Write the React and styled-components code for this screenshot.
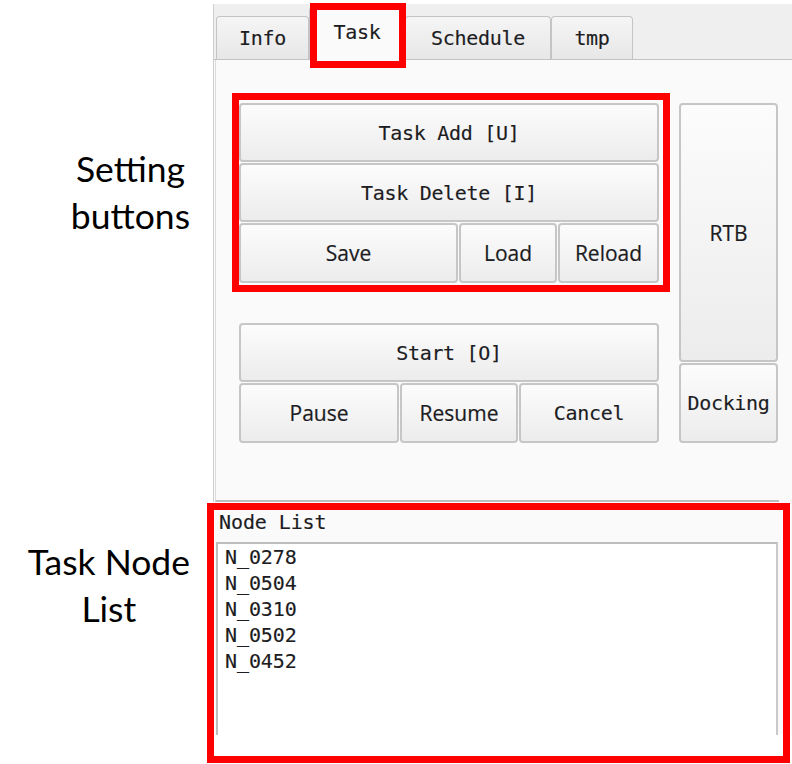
import React from 'react';
import styled, { createGlobalStyle, css } from 'styled-components';

const MONO = `"DejaVu Sans Mono", "Liberation Mono", monospace`;
const SANS = `"Open Sans", "Noto Sans", sans-serif`;

const GlobalStyle = createGlobalStyle`
    html, body {
        margin: 0;
        padding: 0;
        background: #fff;
    }
    body {
        width: 792px;
        height: 764px;
        overflow: hidden;
    }
`;

// red annotation frame drawn over a part of the UI
const redBox = ({ top, right, bottom, left }) => css`
    &::after {
        content: '';
        position: absolute;
        top: ${top}px;
        right: ${right}px;
        bottom: ${bottom}px;
        left: ${left}px;
        border: 7px solid #ff0000;
        pointer-events: none;
        z-index: 5;
    }
`;

const monoText = css`
    font-family: ${MONO};
    font-size: 20px;
    letter-spacing: -0.3px;
    color: #1c1c22;
    -webkit-text-stroke: 0.15px #1c1c22;
`;

const Page = styled.div`
    display: grid;
    grid-template-columns: 213px 579px;
    width: 792px;
    height: 764px;
`;

const Labels = styled.div`
    display: flex;
    flex-direction: column;
    align-items: flex-end;
    padding: 145px 23px 0 0;
    font-family: Lato, "Open Sans", sans-serif;
    font-size: 35.5px;
    line-height: 47px;
    color: #000;
`;

const Callout = styled.div`
    text-align: center;
    margin-top: ${(p) => p.$offset || 0}px;
`;

const Window = styled.div`
    margin-top: 4px;
    display: flex;
    flex-direction: column;
`;

const TabBar = styled.div`
    height: 55px;
    display: flex;
    align-items: flex-end;
    padding-left: 2px;
    background: #efefef;
    border-left: 1px solid #cfcfcf;
    border-bottom: 1px solid #c3c3c3;
`;

const Tab = styled.div`
    position: relative;
    box-sizing: border-box;
    width: ${(p) => p.$w}px;
    height: ${(p) => (p.$active ? 53 : 43)}px;
    margin-bottom: ${(p) => (p.$active ? -1 : 0)}px;
    display: flex;
    align-items: center;
    justify-content: center;
    padding-bottom: ${(p) => (p.$active ? 4 : 0)}px;
    border: 1px solid #c4c4c4;
    border-bottom: none;
    border-radius: 4px 4px 0 0;
    background: ${(p) => (p.$active ? '#fafafa' : 'linear-gradient(#f5f5f5, #e7e7e7)')};
    ${monoText}
    ${(p) => p.$marked && redBox({ top: -5, right: -2, bottom: -8, left: 0 })}
`;

const Main = styled.div`
    background: #fafafa;
    border-left: 1px solid #cfcfcf;
`;

const TabPage = styled.div`
    box-sizing: border-box;
    width: 564px;
    height: 442px;
    margin-left: 1px;
    border-left: 1px solid #dcdcdc;
    border-bottom: 2px solid #bdbdbd;
    padding: 43px 0 0 23px;
    display: flex;
    align-items: flex-start;
    gap: 20px;
`;

const LeftStack = styled.div`
    width: 420px;
    display: flex;
    flex-direction: column;
    gap: 40px;
`;

const ButtonGroup = styled.div`
    position: relative;
    display: grid;
    grid-template-rows: ${(p) => p.$rows};
    gap: 1px;
    ${(p) => p.$marked && redBox({ top: -10, right: -11, bottom: -9, left: -7 })}
`;

const ButtonRow = styled.div`
    display: grid;
    grid-template-columns: ${(p) => p.$cols};
    gap: 1px;
`;

const SideStack = styled.div`
    width: 99px;
    display: grid;
    grid-template-rows: 259px 80px;
    gap: 1px;
`;

const Button = styled.button`
    box-sizing: border-box;
    margin: 0;
    padding: 0;
    width: 100%;
    height: 100%;
    border: 2px solid #c6c6c6;
    border-radius: 4px;
    background: linear-gradient(#fcfcfc, #ececec);
    ${(p) =>
        p.$mono
            ? monoText
            : css`
                  font-family: ${SANS};
                  font-size: 21px;
                  color: #1c1c22;
                  -webkit-text-stroke: 0.2px #1c1c22;
              `}
`;

const BottomArea = styled.div`
    position: relative;
    height: 262px;
    background: #fff;
    ${redBox({ top: 1, right: 2, bottom: 1, left: -6 })}
`;

const ListSection = styled.div`
    height: 233px;
    display: flex;
    flex-direction: column;
    background: #fafafa;
`;

const ListTitle = styled.div`
    height: 40px;
    display: flex;
    align-items: center;
    padding-left: 6px;
    ${monoText}
    letter-spacing: -0.1px;
`;

const ListBox = styled.div`
    flex: 1;
    width: 562px;
    box-sizing: border-box;
    margin-left: 3px;
    padding-left: 7px;
    background: #fff;
    border-top: 2px solid #bdbdbd;
    border-left: 2px solid #bdbdbd;
    border-right: 2px solid #c9c9c9;
`;

const ListItem = styled.div`
    ${monoText}
    letter-spacing: -0.1px;
    line-height: 26px;
`;

const tabs = [
    { label: 'Info', w: 93 },
    { label: 'Task', w: 96, active: true },
    { label: 'Schedule', w: 146 },
    { label: 'tmp', w: 82 },
];

const nodes = ['N_0278', 'N_0504', 'N_0310', 'N_0502', 'N_0452'];

export default function App() {
    return (
        <>
            <GlobalStyle />
            <Page>
                <Labels>
                    <Callout>
                        Setting
                        <br />
                        buttons
                    </Callout>
                    <Callout $offset={299}>
                        Task Node
                        <br />
                        List
                    </Callout>
                </Labels>
                <Window>
                    <TabBar>
                        {tabs.map((t) => (
                            <Tab key={t.label} $w={t.w} $active={t.active} $marked={t.active}>
                                {t.label}
                            </Tab>
                        ))}
                    </TabBar>
                    <Main>
                        <TabPage>
                            <LeftStack>
                                <ButtonGroup $rows="59px 59px 60px" $marked>
                                    <Button $mono>Task Add [U]</Button>
                                    <Button $mono>Task Delete [I]</Button>
                                    <ButtonRow $cols="219px 98px 1fr">
                                        <Button>Save</Button>
                                        <Button>Load</Button>
                                        <Button>Reload</Button>
                                    </ButtonRow>
                                </ButtonGroup>
                                <ButtonGroup $rows="59px 60px">
                                    <Button $mono>Start [O]</Button>
                                    <ButtonRow $cols="160px 118px 1fr">
                                        <Button>Pause</Button>
                                        <Button>Resume</Button>
                                        <Button $mono>Cancel</Button>
                                    </ButtonRow>
                                </ButtonGroup>
                            </LeftStack>
                            <SideStack>
                                <Button>RTB</Button>
                                <Button $mono>Docking</Button>
                            </SideStack>
                        </TabPage>
                    </Main>
                    <BottomArea>
                        <ListSection>
                            <ListTitle>Node List</ListTitle>
                            <ListBox>
                                {nodes.map((n) => (
                                    <ListItem key={n}>{n}</ListItem>
                                ))}
                            </ListBox>
                        </ListSection>
                    </BottomArea>
                </Window>
            </Page>
        </>
    );
}
